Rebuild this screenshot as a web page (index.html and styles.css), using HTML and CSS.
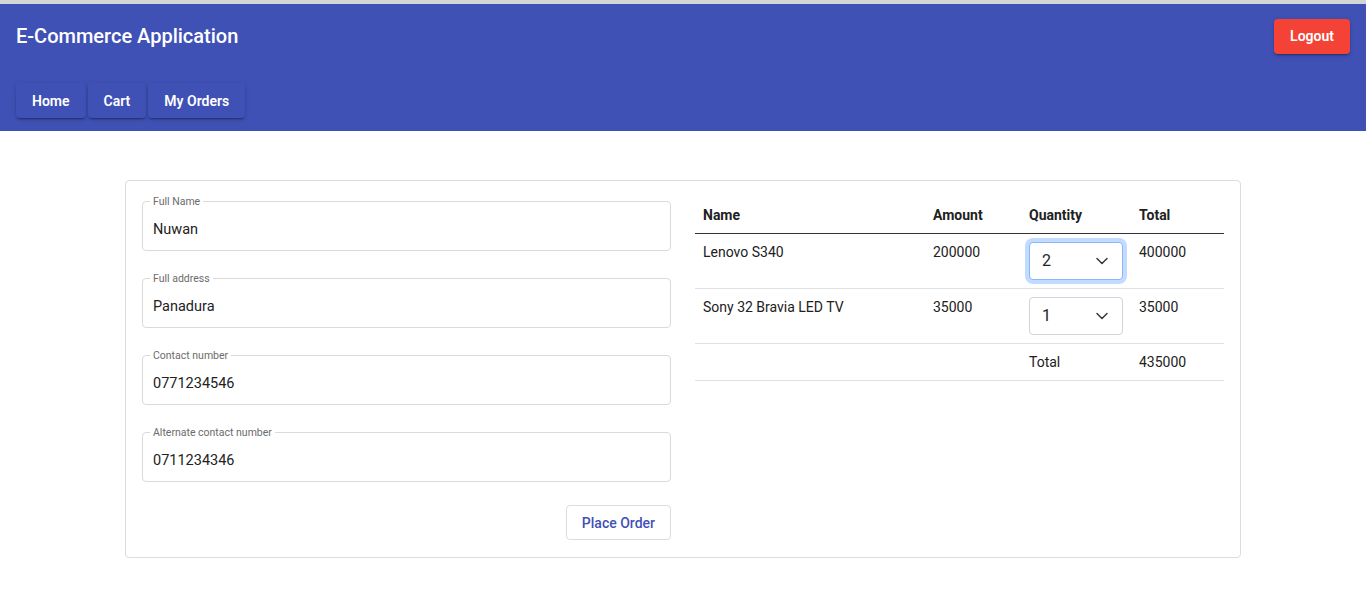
FILE: index.html
```html
<!DOCTYPE html>
<html lang="en">
<head>
<meta charset="utf-8">
<title>E-Commerce Application</title>
<link rel="stylesheet" href="styles.css">
</head>
<body>
<header class="appbar">
  <div class="toolbar">
    <h1 class="brand">E-Commerce Application</h1>
    <button class="btn-logout">Logout</button>
  </div>
  <nav class="nav">
    <button class="nav-btn">Home</button>
    <button class="nav-btn">Cart</button>
    <button class="nav-btn">My Orders</button>
  </nav>
</header>

<main class="main">
  <section class="card">
    <form class="form">
      <div class="field">
        <span class="field-label">Full Name</span>
        <span class="field-value">Nuwan</span>
      </div>
      <div class="field">
        <span class="field-label">Full address</span>
        <span class="field-value">Panadura</span>
      </div>
      <div class="field">
        <span class="field-label">Contact number</span>
        <span class="field-value">0771234546</span>
      </div>
      <div class="field">
        <span class="field-label">Alternate contact number</span>
        <span class="field-value">0711234346</span>
      </div>
      <div class="form-actions">
        <button type="button" class="btn-outline">Place Order</button>
      </div>
    </form>

    <div class="cart">
      <table class="cart-table">
        <thead>
          <tr>
            <th class="col-name">Name</th>
            <th class="col-amount">Amount</th>
            <th class="col-qty">Quantity</th>
            <th class="col-total">Total</th>
          </tr>
        </thead>
        <tbody>
          <tr>
            <td>Lenovo S340</td>
            <td>200000</td>
            <td>
              <div class="select select-focus">
                <span>2</span>
                <svg class="chev" width="16" height="12" viewBox="0 0 16 12"><path d="M3 3.5 L8 8.5 L13 3.5" fill="none" stroke="#343a40" stroke-width="1.5" stroke-linecap="round" stroke-linejoin="round"/></svg>
              </div>
            </td>
            <td>400000</td>
          </tr>
          <tr>
            <td>Sony 32 Bravia LED TV</td>
            <td>35000</td>
            <td>
              <div class="select">
                <span>1</span>
                <svg class="chev" width="16" height="12" viewBox="0 0 16 12"><path d="M3 3.5 L8 8.5 L13 3.5" fill="none" stroke="#343a40" stroke-width="1.5" stroke-linecap="round" stroke-linejoin="round"/></svg>
              </div>
            </td>
            <td>35000</td>
          </tr>
          <tr class="total-row">
            <td></td>
            <td></td>
            <td>Total</td>
            <td>435000</td>
          </tr>
        </tbody>
      </table>
    </div>
  </section>
</main>
</body>
</html>
```

FILE: styles.css
```css
* { box-sizing: border-box; }

html, body {
  margin: 0;
  padding: 0;
  background: #fff;
  font-family: Roboto, "Liberation Sans", Arial, sans-serif;
  color: #212121;
}

body {
  border-top: 4px solid #d4d4d4;
}

.appbar {
  background: #3f51b5;
  color: #fff;
}

.toolbar {
  height: 64px;
  display: flex;
  align-items: center;
  justify-content: space-between;
  padding: 0 16px;
}

.brand {
  margin: 0;
  font-size: 20px;
  font-weight: 500;
  letter-spacing: 0;
}

.btn-logout {
  height: 35px;
  padding: 0 16px;
  border: 0;
  border-radius: 4px;
  background: #f44336;
  color: #fff;
  font-family: inherit;
  font-size: 14px;
  font-weight: 600;
  box-shadow: 0 3px 1px -2px rgba(0,0,0,.2), 0 2px 2px 0 rgba(0,0,0,.14), 0 1px 5px 0 rgba(0,0,0,.12);
}

.nav {
  display: flex;
  gap: 2px;
  padding: 15px 16px 13px;
}

.nav-btn {
  height: 35px;
  padding: 0 16px;
  border: 0;
  border-radius: 4px;
  background: #3f51b5;
  color: #fff;
  font-family: inherit;
  font-size: 14px;
  font-weight: 600;
  box-shadow: 0 3px 1px -2px rgba(0,0,0,.2), 0 2px 2px 0 rgba(0,0,0,.14), 0 1px 5px 0 rgba(0,0,0,.12);
}

.main {
  padding-top: 49px;
  display: flex;
  justify-content: center;
}

.card {
  width: 1116px;
  border: 1px solid #dcdcdc;
  border-radius: 4px;
  padding: 16px;
  display: flex;
  gap: 24px;
  align-items: flex-start;
}

.form {
  width: 529px;
  padding-top: 4px;
  display: flex;
  flex-direction: column;
  gap: 27px;
}

.field {
  position: relative;
  height: 50px;
  border: 1px solid #dadada;
  border-radius: 4px;
  padding: 6px 10px 0;
  display: flex;
  align-items: center;
}

.field-label {
  position: absolute;
  top: -6px;
  left: 7px;
  padding: 0 3px;
  background: #fff;
  font-size: 10.5px;
  line-height: 12px;
  color: #6b6b6b;
}

.field-value {
  font-size: 14.5px;
  color: #222;
}

.form-actions {
  display: flex;
  justify-content: flex-end;
  margin-top: -4px;
  padding-bottom: 1px;
}

.btn-outline {
  height: 35px;
  padding: 0 15px;
  background: #fff;
  border: 1px solid #dcdcdc;
  border-radius: 4px;
  color: #3f51b5;
  font-family: inherit;
  font-size: 14px;
  font-weight: 500;
}

.cart {
  width: 529px;
}

.cart-table {
  width: 100%;
  border-collapse: collapse;
  font-size: 14px;
}

.cart-table th,
.cart-table td {
  text-align: left;
  vertical-align: top;
  padding: 8px;
  line-height: 20px;
}

.cart-table th {
  font-weight: 700;
  color: #212121;
  border-bottom: 1px solid #333;
}

.cart-table td {
  color: #212121;
  border-bottom: 1px solid #dee2e6;
}

.col-name { width: 230px; }
.col-amount { width: 96px; }
.col-qty { width: 110px; }
.col-total { width: 93px; }

.select {
  width: 94px;
  height: 38px;
  border: 1px solid #ced4da;
  border-radius: 4px;
  padding: 0 12px;
  display: flex;
  align-items: center;
  justify-content: space-between;
  font-size: 16px;
  color: #212529;
  background: #fff;
}

.select-focus {
  border-color: #86b7fe;
  box-shadow: 0 0 0 4px rgba(13,110,253,.25);
}

.chev {
  display: block;
}
```
